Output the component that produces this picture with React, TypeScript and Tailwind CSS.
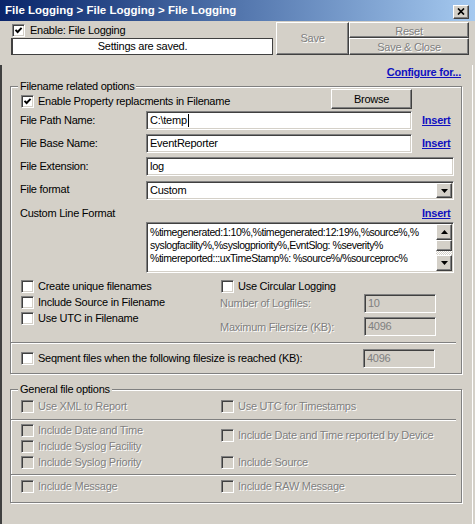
import clsx from "clsx";
import type { ReactNode } from "react";

const sunken =
  "border border-t-[#808080] border-l-[#808080] border-b-white border-r-white shadow-[inset_1px_1px_0_#404040,inset_-1px_-1px_0_#d4d0c8]";
const raised =
  "border border-t-white border-l-white border-b-[#404040] border-r-[#404040] shadow-[inset_-1px_-1px_0_#808080]";
const grey = "text-[#808080] [text-shadow:1px_1px_0_#fff]";
const link = "font-bold text-[#1010c0] underline";

function Check({ checked, disabled }: { checked?: boolean; disabled?: boolean }) {
  return (
    <span
      className={clsx(
        sunken,
        "flex h-[13px] w-[13px] shrink-0 items-center justify-center",
        disabled ? "bg-[#d4d0c8]" : "bg-white"
      )}
    >
      {checked && (
        <svg width="9" height="9" viewBox="0 0 9 9">
          <path d="M1.5 3.8L3.6 6L7.6 1.8" fill="none" stroke="black" strokeWidth="1.9" />
        </svg>
      )}
    </span>
  );
}

function CheckLabel({
  children,
  checked,
  disabled,
  textGrey,
}: {
  children: ReactNode;
  checked?: boolean;
  disabled?: boolean;
  textGrey?: boolean;
}) {
  return (
    <label className="flex h-[13px] items-center gap-[4px] whitespace-nowrap pl-[1px]">
      <Check checked={checked} disabled={disabled} />
      <span className={clsx("leading-[13px]", (disabled || textGrey) && grey)}>{children}</span>
    </label>
  );
}

function Field({
  value,
  width,
  disabled,
  caret,
}: {
  value: string;
  width: string;
  disabled?: boolean;
  caret?: boolean;
}) {
  return (
    <div
      className={clsx(
        sunken,
        width,
        "flex h-[19px] shrink-0 items-center pl-[3px]",
        disabled ? "bg-[#d4d0c8] text-[#808080]" : "bg-white"
      )}
    >
      {value}
      {caret && <span className="ml-[1px] h-[13px] w-[1px] bg-black" />}
    </div>
  );
}

function Arrow({ up }: { up?: boolean }) {
  return (
    <svg width="7" height="4" viewBox="0 0 7 4">
      <path d={up ? "M0 4L3.5 0L7 4Z" : "M0 0L7 0L3.5 4Z"} fill="black" />
    </svg>
  );
}

function Separator() {
  return <div className="-ml-[9px] h-[2px] w-[445px] border-t border-b border-t-[#808080] border-b-white" />;
}

export default function App() {
  return (
    <div className="h-[524px] w-[475px] overflow-hidden bg-[#d4d0c8] font-['Liberation_Sans',Arial,sans-serif] text-[11px] tracking-[-0.25px] text-black">
      {/* title bar */}
      <div className="flex h-[21px] items-center justify-between bg-linear-to-r from-[#0a246a] to-[#a6caf0] pl-[5px] pr-[6px]">
        <span className="text-[11.5px] font-bold tracking-normal text-white">
          File Logging &gt; File Logging &gt; File Logging
        </span>
        <button className={clsx(raised, "mt-[2px] flex h-[14px] w-[16px] items-center justify-center bg-[#d4d0c8]")}>
          <svg width="8" height="7" viewBox="0 0 8 7">
            <path d="M1 0.5L7 6.5M7 0.5L1 6.5" stroke="black" strokeWidth="1.7" />
          </svg>
        </button>
      </div>

      {/* top row */}
      <div className="flex h-[35px] pl-[11px] pt-[1px]">
        <div className="flex w-[262px] flex-col">
          <div className="flex h-[16px] items-center">
            <CheckLabel checked>
              <span className="pl-[1px]">Enable: File Logging</span>
            </CheckLabel>
          </div>
          <div className="flex h-[17px] items-center justify-center border border-[#404040] border-l-2 bg-white">
            Settings are saved.
          </div>
        </div>
        <button className={clsx(raised, grey, "ml-[3px] h-[33px] w-[73px]")}>Save</button>
        <div className="flex w-[120px] flex-col">
          <button className={clsx(raised, grey, "h-[16px]")}>Reset</button>
          <button className={clsx(raised, grey, "h-[17px]")}>Save &amp; Close</button>
        </div>
      </div>

      {/* body */}
      <div className="h-[461px] w-[473px] border-r border-b border-l-2 border-r-white border-b-white border-l-[#404040] pl-[8px]">
        <div className="mt-[9px] flex h-[14px] items-center justify-end pr-[11px]">
          <a className={link}>Configure for...</a>
        </div>

        <fieldset className="mt-[1px] h-[294px] w-[452px] border border-[#808080] pl-[9px] shadow-[inset_1px_1px_0_#fff,1px_1px_0_#fff]">
          <legend className="-ml-[2px] bg-[#d4d0c8] px-[2px] leading-[13px]">Filename related options</legend>
          <div className="flex flex-col">
            <div className="-mt-[4px] flex h-[20px] items-start">
              <div className="mt-[6px] w-[311px]">
                <CheckLabel checked>Enable Property replacments in Filename</CheckLabel>
              </div>
              <button className={clsx(raised, "h-[20px] w-[81px]")}>Browse</button>
            </div>

            <div className="mt-[2px] flex h-[19px] items-center">
              <span className="w-[126px]">File Path Name:</span>
              <Field value={"C:\\temp"} width="w-[266px]" caret />
              <a className={clsx(link, "ml-[10px]")}>Insert</a>
            </div>
            <div className="mt-[4px] flex h-[19px] items-center">
              <span className="w-[126px]">File Base Name:</span>
              <Field value="EventReporter" width="w-[266px]" />
              <a className={clsx(link, "ml-[10px]")}>Insert</a>
            </div>
            <div className="mt-[4px] flex h-[19px] items-center">
              <span className="w-[126px]">File Extension:</span>
              <Field value="log" width="w-[308px]" />
            </div>
            <div className="mt-[5px] flex h-[19px] items-center">
              <span className="-mt-[2px] w-[126px]">File format</span>
              <div className={clsx(sunken, "flex h-[19px] w-[308px] items-center justify-between bg-white pl-[3px] pr-[1px]")}>
                Custom
                <span className={clsx(raised, "flex h-[15px] w-[16px] items-center justify-center bg-[#d4d0c8]")}>
                  <Arrow />
                </span>
              </div>
            </div>

            <div className="mt-[7px] flex h-[13px] items-center">
              <span className="w-[402px]">Custom Line Format</span>
              <a className={link}>Insert</a>
            </div>
            <div className={clsx(sunken, "mt-[2px] ml-[126px] flex h-[51px] w-[308px] bg-white pr-[1px] pt-[1px] pb-[1px]")}>
              <div className="flex-1 overflow-hidden whitespace-nowrap pl-[3px] pt-[2px] text-[10.5px] leading-[13px] tracking-[-0.45px]">
                <div>%timegenerated:1:10%,%timegenerated:12:19%,%source%,%</div>
                <div>syslogfacility%,%syslogpriority%,EvntSlog: %severity%</div>
                <div>%timereported:::uxTimeStamp%: %source%/%sourceproc%</div>
              </div>
              <div className="flex w-[16px] flex-col">
                <span className={clsx(raised, "flex h-[16px] items-center justify-center bg-[#d4d0c8]")}>
                  <Arrow up />
                </span>
                <span className={clsx(raised, "h-[11px] bg-[#d4d0c8]")} />
                <span className="flex-1 bg-[repeating-conic-gradient(#fff_0_25%,#d4d0c8_0_50%)] bg-[length:2px_2px]" />
                <span className={clsx(raised, "flex h-[16px] items-center justify-center bg-[#d4d0c8]")}>
                  <Arrow />
                </span>
              </div>
            </div>

            <div className="mt-[7px] flex">
              <div className="flex w-[200px] flex-col gap-[3px]">
                <CheckLabel>Create unique filenames</CheckLabel>
                <CheckLabel>Include Source in Filename</CheckLabel>
                <CheckLabel>Use UTC in Filename</CheckLabel>
              </div>
              <div className="flex flex-col">
                <div className="h-[14px]">
                  <CheckLabel>Use Circular Logging</CheckLabel>
                </div>
                <div className="flex h-[19px] items-center">
                  <span className={clsx(grey, "w-[144px]")}>Number of Logfiles:</span>
                  <Field value="10" width="w-[72px]" disabled />
                </div>
                <div className="mt-[4px] flex h-[19px] items-center">
                  <span className={clsx(grey, "mt-[2px] w-[144px]")}>Maximum Filersize (KB):</span>
                  <Field value="4096" width="w-[72px]" disabled />
                </div>
              </div>
            </div>

            <div className="mt-[6px]">
              <Separator />
            </div>

            <div className="mt-[5px] flex h-[19px] items-center">
              <div className="w-[343px]">
                <CheckLabel>Seqment files when the following filesize is reached (KB):</CheckLabel>
              </div>
              <Field value="4096" width="w-[72px]" disabled />
            </div>
          </div>
        </fieldset>

        <fieldset className="mt-[9px] h-[120px] w-[452px] border border-[#808080] pl-[9px] shadow-[inset_1px_1px_0_#fff,1px_1px_0_#fff]">
          <legend className="-ml-[2px] bg-[#d4d0c8] px-[2px] leading-[13px]">General file options</legend>
          <div className="flex flex-col">
            <div className="mt-[4px] flex">
              <div className="w-[200px]">
                <CheckLabel disabled>Use XML to Report</CheckLabel>
              </div>
              <CheckLabel disabled>Use UTC for Timestamps</CheckLabel>
            </div>
            <div className="mt-[6px]">
              <Separator />
            </div>
            <div className="mt-[3px] flex">
              <div className="flex w-[200px] flex-col gap-[3px]">
                <CheckLabel disabled>Include Date and Time</CheckLabel>
                <CheckLabel disabled>Include Syslog Facility</CheckLabel>
                <CheckLabel disabled>Include Syslog Priority</CheckLabel>
              </div>
              <div className="flex flex-col">
                <div className="mt-[5px]">
                  <CheckLabel disabled>Include Date and Time reported by Device</CheckLabel>
                </div>
                <div className="mt-[14px]">
                  <CheckLabel disabled>Include Source</CheckLabel>
                </div>
              </div>
            </div>
            <div className="mt-[5px]">
              <Separator />
            </div>
            <div className="mt-[4px] flex">
              <div className="w-[200px]">
                <CheckLabel disabled>Include Message</CheckLabel>
              </div>
              <CheckLabel disabled>Include RAW Message</CheckLabel>
            </div>
          </div>
        </fieldset>
      </div>
    </div>
  );
}
